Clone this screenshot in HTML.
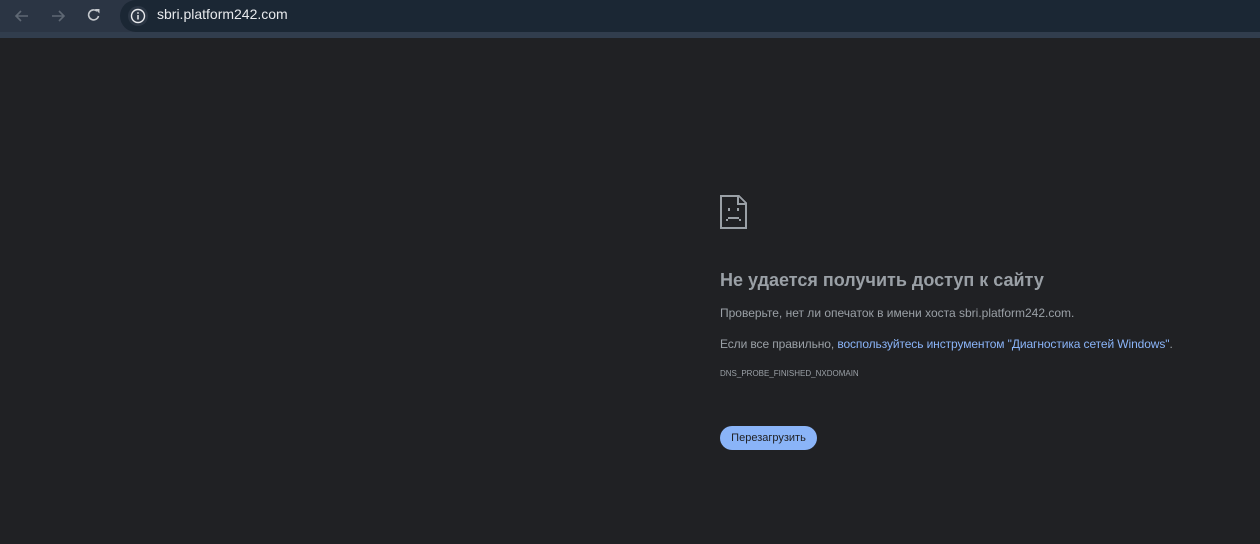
<!DOCTYPE html>
<html><head><meta charset="utf-8"><style>
body{margin:0;width:1260px;height:544px;background:#202124;overflow:hidden;font-family:"Liberation Sans","DejaVu Sans",sans-serif;position:relative}
.tb{position:absolute;left:0;top:0;width:1260px;height:38px;background:#2b3544}
.tb2{position:absolute;left:0;top:32px;width:1260px;height:6px;background:#313d4d}
.omni{position:absolute;left:120px;top:0;width:1140px;height:32px;background:#1b2734;border-radius:16px 0 0 16px}
.url{position:absolute;left:157px;top:6px;font-size:14px;color:#e8eaed}
.ic{position:absolute}
h1{position:absolute;left:720px;top:270px;margin:0;font-size:18px;font-weight:bold;color:#9aa0a6;white-space:nowrap}
p{position:absolute;left:720px;margin:0;font-size:12px;color:#9aa0a6;white-space:nowrap}
a{color:#8ab4f8;text-decoration:none}
.btn{position:absolute;left:720px;top:426px;width:97px;height:24px;border-radius:12px;background:#8ab4f8;color:#202124;font-size:11px;text-align:center;line-height:24px}
</style></head><body>
<div class="tb"></div><div class="tb2"></div>
<svg class="ic" style="left:13px;top:8px" width="18" height="16" viewBox="0 0 18 16"><path d="M15 8H3M8 3L3 8l5 5" stroke="#5f6874" stroke-width="1.6" fill="none"/></svg>
<svg class="ic" style="left:49px;top:8px" width="18" height="16" viewBox="0 0 18 16"><path d="M3 8h12M10 3l5 5-5 5" stroke="#5f6874" stroke-width="1.6" fill="none"/></svg>
<svg class="ic" style="left:86px;top:7px" width="16" height="16" viewBox="0 0 16 16"><path d="M12.5 9A5 5 0 1 1 11 4.2" stroke="#c4c8cd" stroke-width="1.6" fill="none"/><path d="M9 2h4.5v4.5z" fill="#c4c8cd"/></svg>
<div class="omni"></div>
<svg class="ic" style="left:128px;top:6px" width="20" height="20" viewBox="0 0 20 20"><circle cx="10" cy="10" r="10" fill="#2b3644"/><circle cx="10" cy="10" r="6.5" stroke="#e8eaed" stroke-width="1.4" fill="none"/><path d="M10 9v4.5" stroke="#e8eaed" stroke-width="1.5"/><circle cx="10" cy="7" r="0.9" fill="#e8eaed"/></svg>
<div class="url">sbri.platform242.com</div>
<svg class="ic" style="left:720px;top:195px" width="28" height="34" viewBox="0 0 28 34"><path d="M1 1h18l7 7v25H1z M18 1v8h8" stroke="#9aa0a6" stroke-width="2" fill="none" shape-rendering="crispEdges"/><rect x="8" y="13" width="2" height="3" fill="#9aa0a6"/><rect x="17" y="13" width="2" height="3" fill="#9aa0a6"/><rect x="8" y="22" width="11" height="2" fill="#9aa0a6"/><rect x="6" y="24" width="2" height="2" fill="#9aa0a6"/><rect x="19" y="24" width="2" height="2" fill="#9aa0a6"/></svg>
<h1>Не удается получить доступ к сайту</h1>
<p style="top:306px">Проверьте, нет ли опечаток в имени хоста sbri.platform242.com.</p>
<p style="top:337px;letter-spacing:-0.1px">Если все правильно, <a>воспользуйтесь инструментом "Диагностика сетей Windows"</a>.</p>
<p style="top:369px;font-size:8px">DNS_PROBE_FINISHED_NXDOMAIN</p>
<div class="btn">Перезагрузить</div>
</body></html>
